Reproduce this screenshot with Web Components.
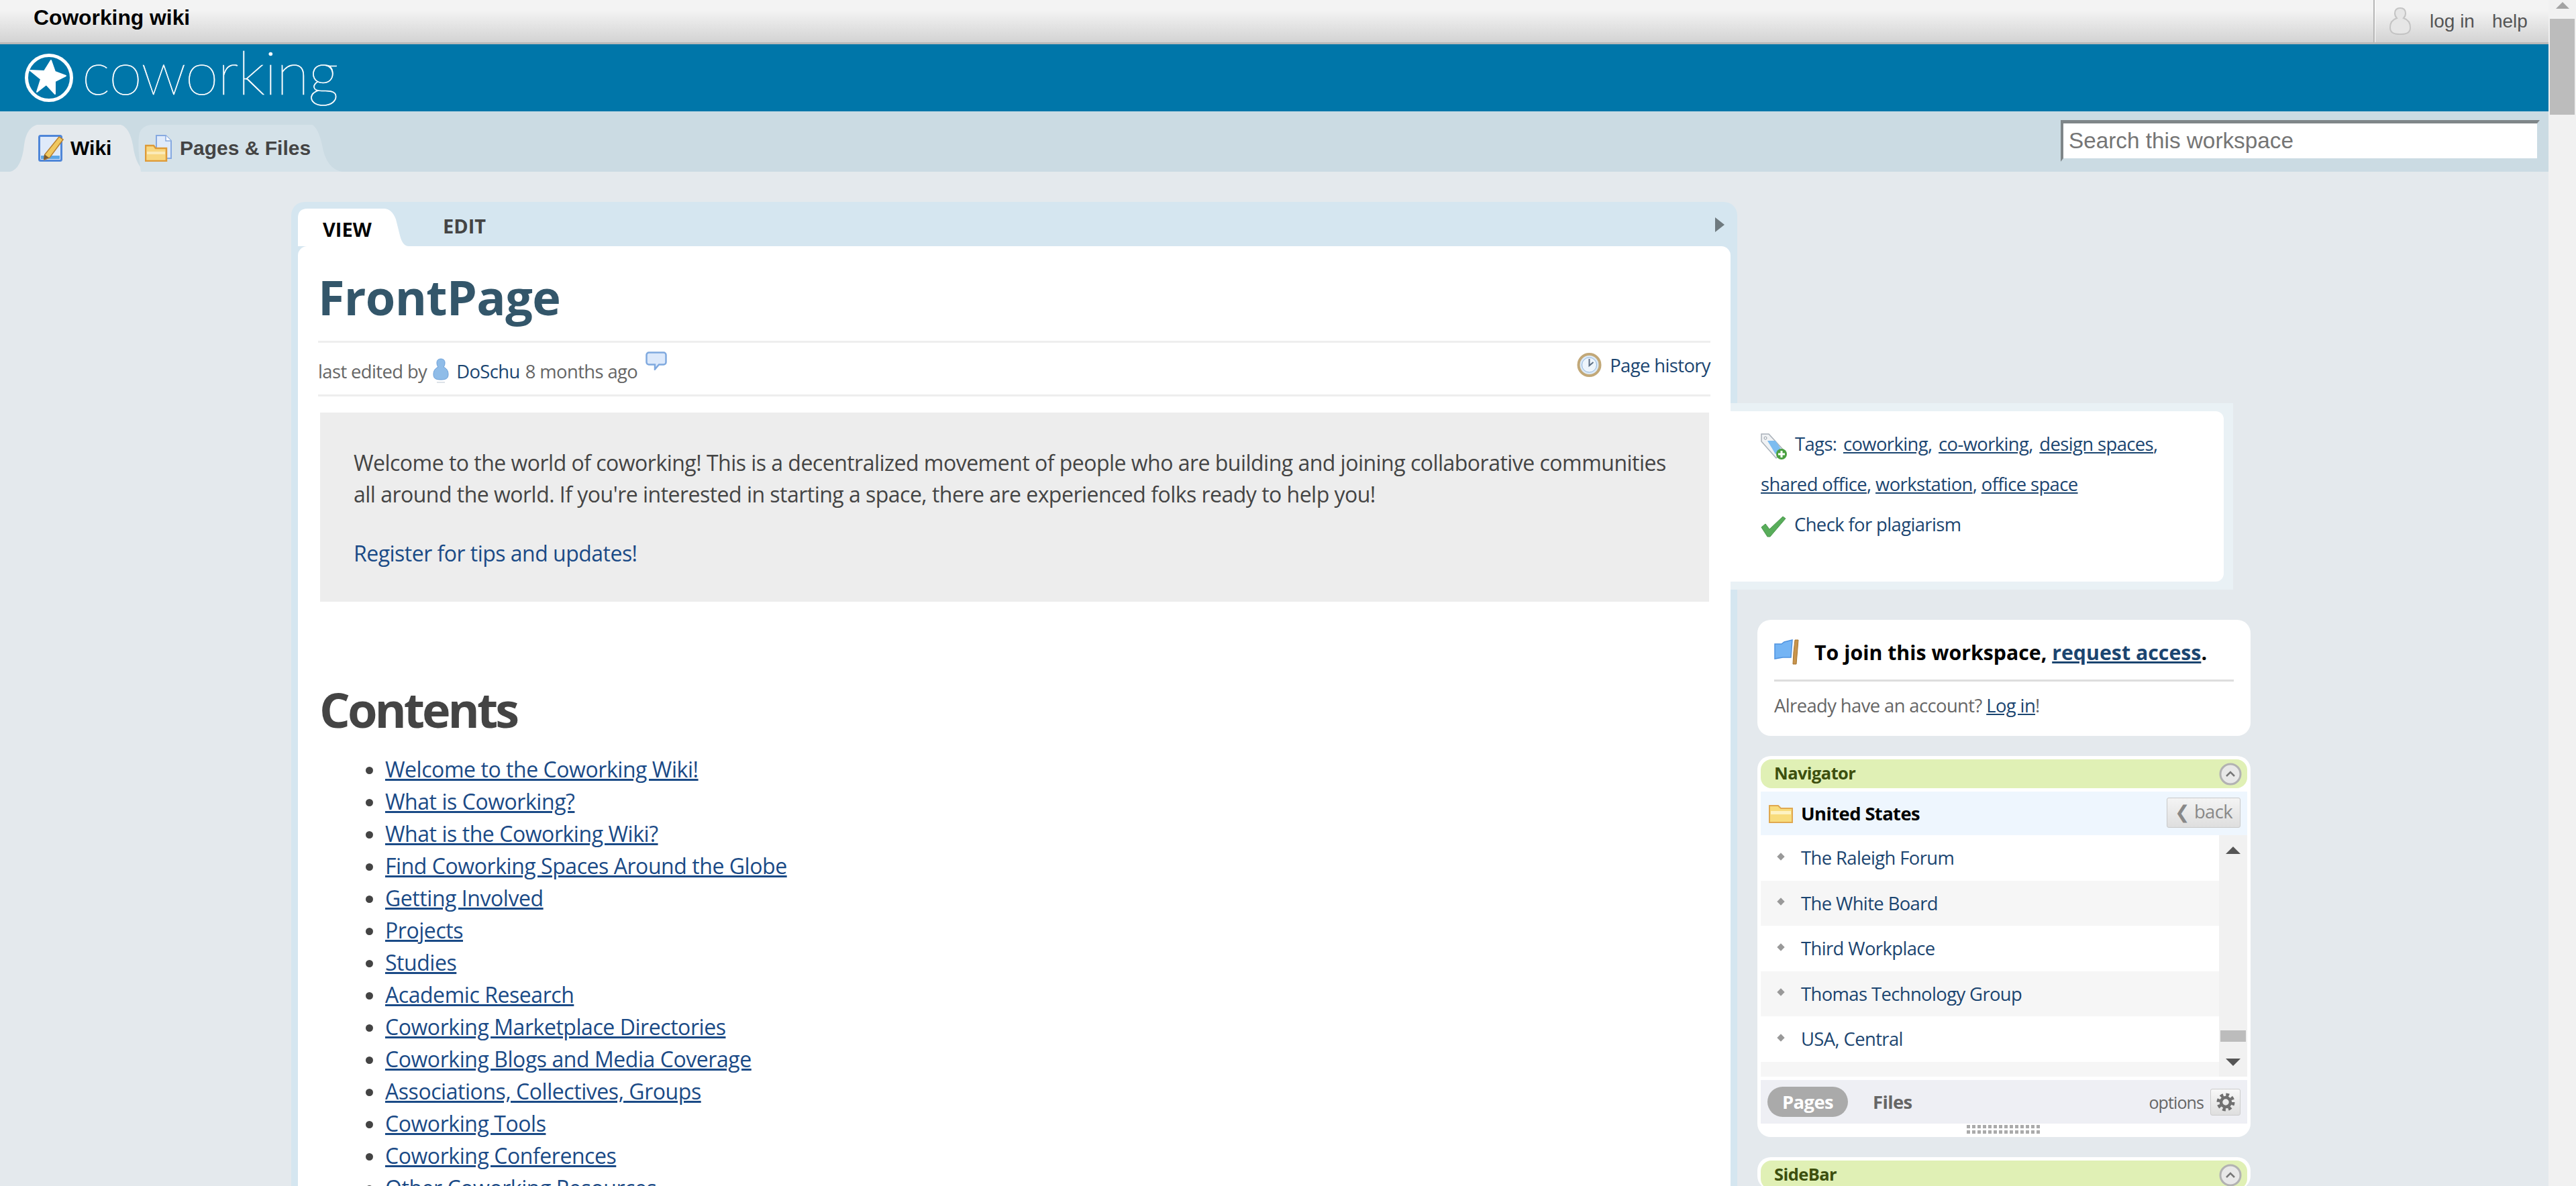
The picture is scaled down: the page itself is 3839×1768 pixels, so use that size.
<!DOCTYPE html>
<html lang="en">
<head>
<meta charset="utf-8">
<title>Coworking wiki</title>
<style>
    html, body { margin: 0; height: 100%; overflow: hidden; background: #e4e9ed; }
    body { font-family: "Open Sans", "Liberation Sans", sans-serif; color: #444; }
</style>
</head>
<body>
<cw-app></cw-app>
<script>
const ICONS = {
    pageEdit: `<svg width="38" height="40" viewBox="0 0 38 40"><rect x="1.5" y="1.5" width="33" height="37" rx="2" fill="#dfeafa" stroke="#4f86d8" stroke-width="3"/><rect x="4" y="31" width="28" height="5" fill="#5aa5e6"/><path d="M31 3l6 4-20 27-8 3 1-8z" fill="#f0c860" stroke="#b98030" stroke-width="1.5"/><path d="M9 29l-1 8 8-3z" fill="#7a5a30"/></svg>`,
    pages: `<svg width="40" height="40" viewBox="0 0 40 40"><path d="M17 1h14l8 8v26H17z" fill="#e0ebfb" stroke="#86a9e0" stroke-width="2"/><path d="M31 1v8h8" fill="#fff" stroke="#86a9e0" stroke-width="1.5"/><path d="M1 16h12l3 4h16v19H1z" fill="#f8d780" stroke="#dd9a38" stroke-width="2.5"/><rect x="3" y="25" width="27" height="4" fill="#fbeab8"/></svg>`,
    userGrey: `<svg width="32" height="41" viewBox="0 0 32 41"><path d="M16 1c5 0 8 3 8 8 0 4-2 6-3 7 6 2 10 6 10 14 0 7-4 10-15 10S1 37 1 30c0-8 4-12 10-14-1-1-3-3-3-7 0-5 3-8 8-8z" fill="#e6e6e6" stroke="#c4c4c4" stroke-width="2"/></svg>`,
    userBlue: `<svg width="24" height="38" viewBox="0 0 24 38"><path d="M12 1c4 0 6 2 6 6 0 3-1 5-2 6 4 2 7 5 7 11 0 6-3 8-11 8S1 30 1 24c0-6 3-9 7-11-1-1-2-3-2-6 0-4 2-6 6-6z" fill="#8fbce8" stroke="#6b9fd8"/><rect x="6" y="35" width="12" height="2" fill="#dde3e8"/></svg>`,
    comment: `<svg width="32" height="28" viewBox="0 0 32 28"><path d="M5 1.500h22a3.500 3.500 0 0 1 3.500 3.500v11a3.500 3.500 0 0 1-3.500 3.500h-7l-6 7v-7h-9A3.500 3.500 0 0 1 1.500 16V5A3.500 3.500 0 0 1 5 1.500z" fill="#dce9fb" stroke="#7fa9df" stroke-width="2.500"/></svg>`,
    clock: `<svg width="37" height="36" viewBox="0 0 37 36"><circle cx="18.500" cy="18" r="16" fill="#dbe9f7" stroke="#c2a878" stroke-width="4"/><circle cx="18.500" cy="18" r="11" fill="#eef5fc" stroke="#8fb4dc"/><path d="M18.500 9v10l6-5" fill="none" stroke="#5d6f85" stroke-width="2"/></svg>`,
    tag: `<svg width="40" height="40" viewBox="0 0 40 40"><path d="M1 2h11l22 24-11 12L1 13z" fill="#f0f2f4" stroke="#a8b0b8" stroke-width="1.500"/><path d="M10 12l12 0 8 12-8 8z" fill="#7cbcf0"/><circle cx="7" cy="8" r="2" fill="#fff" stroke="#8e98a2"/><circle cx="31" cy="32" r="8" fill="#4aa040"/><path d="M31 27v10M26 32h10" stroke="#fff" stroke-width="3"/></svg>`,
    check: `<svg width="38" height="32" viewBox="0 0 38 32"><path d="M1 17l6-5 6 8L33 1l4 3-23 27h-4z" fill="#58ad5a" stroke="#4a964c"/></svg>`,
    flag: `<svg width="38" height="38" viewBox="0 0 38 38"><path d="M1 7l10 0 4-3 12-3-2 26-12 0-12 2z" fill="#74b4f4" stroke="#4f93e0" stroke-width="1.500"/><path d="M31 1l5 0-3 36-5 0 1-18z" fill="#c8944c" stroke="#a6752f"/></svg>`,
    folder: `<svg width="36" height="28" viewBox="0 0 36 28"><path d="M1 2h13l4 4h17v21H1z" fill="#f8dc7c" stroke="#e0a850" stroke-width="2"/><path d="M3 10h30v5H3z" fill="#fdf2c2"/></svg>`,
    collapse: `<svg width="34" height="34" viewBox="0 0 34 34"><circle cx="17" cy="17" r="15" fill="#e8e8e8" stroke="#b2b2b2" stroke-width="3"/><path d="M11 20l6-6 6 6" fill="none" stroke="#777" stroke-width="2.500"/></svg>`,
    gear: `<svg width="28" height="28" viewBox="0 0 28 28"><circle cx="14" cy="14" r="7" fill="none" stroke="#707070" stroke-width="4.500"/><circle cx="14" cy="14" r="11" fill="none" stroke="#707070" stroke-width="5" stroke-dasharray="4.640 4"/></svg>`
};

class CwIcon extends HTMLElement {
    connectedCallback() {
        this.attachShadow({ mode: 'open' });
        this.shadowRoot.innerHTML = `
            <style>
                :host { display: inline-flex; flex: none; }
                svg { display: block; }
            </style>
            ${ICONS[this.getAttribute('name')]}
        `;
    }
}

class CwApp extends HTMLElement {
    connectedCallback() {
        this.attachShadow({ mode: 'open' });
        this.shadowRoot.innerHTML = `
            <style>
                :host { display: grid; grid-template-columns: 3798px 41px; height: 1768px; overflow: hidden; }
                .main { min-width: 0; height: 1768px; overflow: hidden; }
                .content {
                    display: grid;
                    grid-template-columns: 2155px 775px;
                    padding: 45px 0 0 434px;
                    align-items: start;
                }
            </style>
            <div class="main">
                <cw-topbar></cw-topbar>
                <cw-brand></cw-brand>
                <cw-navbar></cw-navbar>
                <div class="content">
                    <cw-wiki-card></cw-wiki-card>
                    <cw-sidebar></cw-sidebar>
                </div>
            </div>
            <cw-page-scroll></cw-page-scroll>
        `;
    }
}

class CwPageScroll extends HTMLElement {
    connectedCallback() {
        this.attachShadow({ mode: 'open' });
        this.shadowRoot.innerHTML = `
            <style>
                :host { display: block; background: #f1f1f1; height: 1768px; padding: 3px 2px 0; box-sizing: border-box; }
                .up { width: 0; height: 0; margin: 0 auto; border: 10px solid transparent; border-top: 0; border-bottom-color: #a3a3a3; }
                .thumb { height: 143px; margin-top: 15px; background: #bcbcbc; }
            </style>
            <div class="up"></div>
            <div class="thumb"></div>
        `;
    }
}

class CwTopbar extends HTMLElement {
    connectedCallback() {
        this.attachShadow({ mode: 'open' });
        this.shadowRoot.innerHTML = `
            <style>
                :host {
                    display: flex;
                    justify-content: space-between;
                    height: 63px;
                    border-bottom: 3px solid #b9b9b9;
                    background: linear-gradient(#f3f3f3 25%, #d3d3d3);
                    font-family: "Liberation Sans", Arial, sans-serif;
                }
                .title { padding: 7px 0 0 50px; font-size: 31.800px; font-weight: bold; color: #000; line-height: 38px; }
                .right {
                    display: flex;
                    align-items: center;
                    width: 261px;
                    box-sizing: border-box;
                    padding: 0 0 0 22px;
                    border-left: 2px solid #b5b5b5;
                    box-shadow: inset 1px 0 0 #fff;
                    color: #555;
                    font-size: 28px;
                }
                .right span { margin-left: 26px; }
                .right span:first-of-type { margin-left: 28px; }
            </style>
            <div class="title">Coworking wiki</div>
            <div class="right">
                <cw-icon name="userGrey"></cw-icon>
                <span>log in</span>
                <span>help</span>
            </div>
        `;
    }
}

class CwBrand extends HTMLElement {
    connectedCallback() {
        this.attachShadow({ mode: 'open' });
        this.shadowRoot.innerHTML = `
            <style>
                :host {
                    display: flex;
                    align-items: center;
                    gap: 12px;
                    height: 100px;
                    padding-left: 36px;
                    background: #0076a9;
                    color: #fff;
                }
                svg { display: block; flex: none; }
                .word {
                    font-family: Lato, "Open Sans", sans-serif;
                    font-weight: 100;
                    font-size: 90px;
                    line-height: 100px;
                    letter-spacing: -1px;
                    margin-top: -20px;
                    -webkit-text-stroke: 0.700px #fff;
                }
            </style>
            <svg width="74" height="76" viewBox="0 0 74 76">
                <circle cx="37" cy="38" r="33.500" fill="none" stroke="#fff" stroke-width="5"/>
                <path d="M40 12L46 29L62 35L46 43L46 62L33 48L19 59L25 40L9 27L30 28Z" fill="#fff" stroke="#fff" stroke-width="2" stroke-linejoin="round"/>
            </svg>
            <span class="word">coworking</span>
        `;
    }
}

class CwNavbar extends HTMLElement {
    connectedCallback() {
        this.attachShadow({ mode: 'open' });
        this.shadowRoot.innerHTML = `
            <style>
                :host {
                    display: flex;
                    align-items: flex-end;
                    justify-content: space-between;
                    height: 90px;
                    background: #cbdbe3;
                    font-family: "Liberation Sans", Arial, sans-serif;
                }
                .tabs { display: flex; padding-left: 15px; }
                .tab {
                    display: flex;
                    align-items: center;
                    gap: 10px;
                    height: 70px;
                    box-sizing: border-box;
                    font-size: 30px;
                    font-weight: bold;
                }
                .wiki {
                    width: 205px;
                    padding-left: 42px;
                    background: #e4e9ed;
                    color: #000;
                    clip-path: path('M0 70Q17 66 21 30Q24 5 40 0H165Q178 4 183 30Q188 66 205 70Z');
                }
                .pages {
                    width: 310px;
                    margin-left: -20px;
                    padding-left: 16px;
                    gap: 12px;
                    background: #d5e2e9;
                    color: #444;
                    clip-path: path('M10 70Q4 30 8 12Q12 2 24 0H265Q274 4 280 30Q286 66 310 70Z');
                }
                input {
                    width: 714px;
                    height: 62px;
                    box-sizing: border-box;
                    margin: 0 13px 15px 0;
                    padding: 0 0 0 8px;
                    border-style: solid;
                    border-width: 5px 4px 5px 4px;
                    border-color: #7f8689 #cbdbe3 #cbdbe3 #7f8689;
                    background: #fff;
                    font: 33.300px "Liberation Sans", Arial, sans-serif;
                    color: #757575;
                    outline: none;
                }
                input::placeholder { color: #757575; opacity: 1; }
            </style>
            <div class="tabs">
                <div class="tab wiki"><cw-icon name="pageEdit"></cw-icon>Wiki</div>
                <div class="tab pages"><cw-icon name="pages"></cw-icon>Pages &amp; Files</div>
            </div>
            <input placeholder="Search this workspace">
        `;
    }
}

class CwWikiCard extends HTMLElement {
    connectedCallback() {
        this.attachShadow({ mode: 'open' });
        const items = ['Welcome to the Coworking Wiki!', 'What is Coworking?', 'What is the Coworking Wiki?',
            'Find Coworking Spaces Around the Globe', 'Getting Involved', 'Projects', 'Studies', 'Academic Research',
            'Coworking Marketplace Directories', 'Coworking Blogs and Media Coverage',
            'Associations, Collectives, Groups', 'Coworking Tools', 'Coworking Conferences', 'Other Coworking Resources'];
        this.shadowRoot.innerHTML = `
            <style>
                :host {
                    display: block;
                    padding: 0 10px;
                    background: #d5e6f0;
                    border-radius: 20px 20px 0 0;
                    font-size: 32px;
                    letter-spacing: -0.450px;
                    color: #444;
                }
                a { color: #1a4a86; }
                .strip { display: flex; height: 66px; }
                .view {
                    width: 165px;
                    height: 56px;
                    margin-top: 10px;
                    box-sizing: border-box;
                    padding-left: 37px;
                    background: #fff;
                    clip-path: path('M0 56V14Q0 0 14 0H128Q140 0 146 16L152 40Q156 56 165 56Z');
                    color: #000;
                    font-size: 29px;
                    font-weight: 700;
                    letter-spacing: 0;
                    line-height: 62px;
                }
                .edit {
                    margin-left: 51px;
                    color: #444;
                    font-size: 29px;
                    font-weight: 700;
                    letter-spacing: 0;
                    line-height: 72px;
                }
                .arrow {
                    margin: 23px 9px 0 auto;
                    width: 0;
                    height: 0;
                    border: solid transparent;
                    border-width: 11.500px 0 11.500px 14px;
                    border-left-color: #6f7a7f;
                }
                .body {
                    padding: 35px 30px 0;
                    background: #fff;
                    border-radius: 14px 14px 0 0;
                    min-height: 1500px;
                }
                h1, h2 { margin: 0; font-size: 72px; line-height: 80px; font-weight: 700; }
                h1 { color: #33566a; letter-spacing: -0.700px; }
                h2 { margin-top: 120px; margin-left: 2px; color: #444; letter-spacing: -4px; }
                .meta {
                    display: flex;
                    justify-content: space-between;
                    height: 77px;
                    margin-top: 26px;
                    border-top: 3px solid #eee;
                    border-bottom: 3px solid #eee;
                    font-size: 27.400px;
                    letter-spacing: -0.600px;
                    color: #666;
                }
                .meta a { color: #1b4570; text-decoration: none; }
                .by { display: flex; align-items: center; gap: 8px; padding-top: 7px; }
                .by cw-icon[name=comment] { margin: -30px 0 0 4px; }
                .by cw-icon[name=userBlue] { margin: 0 3px 0 1px; }
                .hist { display: flex; align-items: center; gap: 12px; padding-bottom: 11px; }
                .welcome {
                    margin: 24px 2px 0 3px;
                    padding: 51px 30px 49px 50px;
                    background: #ededed;
                    line-height: 47px;
                    letter-spacing: -0.520px;
                }
                .welcome p { margin: 0; }
                .welcome p + p { margin-top: 41px; }
                .welcome a { text-decoration: none; }
                ul { margin: 26px 0 0; padding: 0 0 0 100px; line-height: 48px; }
            </style>
            <div class="strip">
                <div class="view">VIEW</div>
                <div class="edit">EDIT</div>
                <div class="arrow"></div>
            </div>
            <div class="body">
                <h1>FrontPage</h1>
                <div class="meta">
                    <div class="by">last edited by <cw-icon name="userBlue"></cw-icon> <a href="#">DoSchu</a> 8 months ago <cw-icon name="comment"></cw-icon></div>
                    <a class="hist" href="#"><cw-icon name="clock"></cw-icon>Page history</a>
                </div>
                <div class="welcome">
                    <p>Welcome to the world of coworking! This is a decentralized movement of people who are building and joining collaborative communities all around the world. If you're interested in starting a space, there are experienced folks ready to help you!</p>
                    <p><a href="#">Register for tips and updates!</a></p>
                </div>
                <h2>Contents</h2>
                <ul>${items.map(t => `<li><a href="#">${t}</a></li>`).join('')}</ul>
            </div>
        `;
    }
}

class CwSidebar extends HTMLElement {
    connectedCallback() {
        this.attachShadow({ mode: 'open' });
        this.shadowRoot.innerHTML = `
            <style>
                :host { display: block; padding-top: 300px; font-size: 27.400px; letter-spacing: -0.600px; color: #666; }
                a { color: #1b4570; }
                .tags {
                    position: relative;
                    width: 749px;
                    margin-left: -10px;
                    box-sizing: border-box;
                    padding: 12px 14px 12px 0;
                    background: #e9f1f5;
                }
                .tags-in {
                    height: 254px;
                    box-sizing: border-box;
                    padding: 19px 0 0 45px;
                    background: #fff;
                    border-radius: 0 12px 12px 0;
                    line-height: 60px;
                    color: #1b4570;
                }
                .tags-in cw-icon { vertical-align: middle; margin-right: 11px; }
                .tags-in .chk { margin-right: 12px; }
                .first a { margin-left: 3px; }
                .stack { display: flex; flex-direction: column; gap: 30px; margin: 45px 0 0 30px; width: 735px; }
                .join { padding: 27px 25px 0; height: 173px; box-sizing: border-box; background: #fff; border-radius: 20px; }
                .join-t { display: flex; align-items: center; gap: 22px; height: 42px; font-size: 30.300px; letter-spacing: 0; font-weight: 700; color: #000; }
                .join hr { height: 3px; margin: 20px 0 17px; border: 0; background: #ddd; }
                .list-head {
                    display: flex;
                    align-items: center;
                    height: 65px;
                    margin-top: 5px;
                    padding: 0 10px 0 12px;
                    background: #eef6fe;
                    color: #000;
                    font-weight: 700;
                }
                .list-head cw-icon { margin-right: 12px; }
                .back {
                    margin: -3px 0 0 auto;
                    width: 110px;
                    height: 45px;
                    box-sizing: border-box;
                    border: 1px solid #c8c8c8;
                    border-radius: 3px;
                    background: linear-gradient(#f4f4f4, #dedede);
                    color: #888;
                    font-weight: 400;
                    text-align: center;
                    line-height: 40px;
                }
                .list { display: grid; grid-template-columns: 683px 42px; height: 360px; overflow: hidden; }
                .row { display: flex; align-items: center; height: 67.500px; padding-left: 60px; box-sizing: border-box; color: #1b4570; }
                .row:nth-child(even) { background: #f6f6f6; }
                .dot { width: 8px; height: 8px; margin: -4px 26px 0 -34px; background: #999; transform: rotate(45deg); }
                .sb { background: #f1f1f1; padding-top: 17px; box-sizing: border-box; }
                .up, .down { width: 0; height: 0; margin: 0 auto; border: solid transparent; border-width: 0 11px 11px; border-bottom-color: #555; }
                .down { border-width: 11px 11px 0; border-top-color: #555; border-bottom-color: transparent; }
                .thumb { height: 17px; margin: 263px 2px 25px; background: #bcbcbc; }
                .foot {
                    display: flex;
                    align-items: center;
                    height: 65px;
                    margin-top: 5px;
                    padding: 0 10px;
                    background: #eeeff4;
                }
                .pill {
                    padding: 0 22px;
                    height: 45px;
                    line-height: 45px;
                    border-radius: 23px;
                    background: #aaa;
                    color: #fff;
                    font-weight: 700;
                }
                .files { margin-left: 37px; font-weight: 700; color: #666; }
                .opt { margin-left: auto; font-size: 25px; letter-spacing: -0.900px; }
                .gear {
                    display: flex;
                    align-items: center;
                    justify-content: center;
                    width: 45px;
                    height: 40px;
                    margin-left: 10px;
                    border: 1px solid #ccc;
                    box-sizing: border-box;
                    border-radius: 3px;
                    background: linear-gradient(#f8f8f8, #dedede);
                }
                .grip {
                    width: 111px;
                    height: 13px;
                    margin: 2px auto 5px;
                    background: repeating-linear-gradient(90deg, #aaa 0 5px, transparent 5px 8px);
                    -webkit-mask: repeating-linear-gradient(#000 0 5px, transparent 5px 8px);
                }
            </style>
            <div class="tags">
                <div class="tags-in">
                    <span class="first"><cw-icon name="tag"></cw-icon>Tags: <a href="#">coworking</a>, <a href="#">co-working</a>, <a href="#">design spaces</a>,</span><br>
                    <a href="#">shared office</a>, <a href="#">workstation</a>, <a href="#">office space</a><br>
                    <cw-icon class="chk" name="check"></cw-icon>Check for plagiarism
                </div>
            </div>
            <div class="stack">
                <div class="join">
                    <div class="join-t"><cw-icon name="flag"></cw-icon><span>To join this workspace, <a href="#">request access</a>.</span></div>
                    <hr>
                    <div>Already have an account? <a href="#">Log in</a>!</div>
                </div>
                <cw-widget title="Navigator">
                    <div class="list-head"><cw-icon name="folder"></cw-icon>United States<div class="back">&#10094; back</div></div>
                    <div class="list">
                        <div>
                            <div class="row"><i class="dot"></i>The Raleigh Forum</div>
                            <div class="row"><i class="dot"></i>The White Board</div>
                            <div class="row"><i class="dot"></i>Third Workplace</div>
                            <div class="row"><i class="dot"></i>Thomas Technology Group</div>
                            <div class="row"><i class="dot"></i>USA, Central</div>
                            <div class="row"></div>
                        </div>
                        <div class="sb"><div class="up"></div><div class="thumb"></div><div class="down"></div></div>
                    </div>
                    <div class="foot">
                        <span class="pill">Pages</span><span class="files">Files</span>
                        <span class="opt">options</span><span class="gear"><cw-icon name="gear"></cw-icon></span>
                    </div>
                    <div class="grip"></div>
                </cw-widget>
                <cw-widget title="SideBar"></cw-widget>
            </div>
        `;
    }
}

class CwWidget extends HTMLElement {
    connectedCallback() {
        this.attachShadow({ mode: 'open' });
        this.shadowRoot.innerHTML = `
            <style>
                :host { display: block; padding: 5px 5px 0; background: #fff; border-radius: 20px; }
                .head {
                    display: flex;
                    align-items: center;
                    justify-content: space-between;
                    height: 43px;
                    box-sizing: border-box;
                    padding: 0 8px 4px 20px;
                    background: #e0f0b5;
                    border-radius: 16px;
                    color: #3d4f0e;
                    font-weight: 700;
                    font-size: 25.500px;
                }
                .head cw-icon { margin-bottom: -4px; }
            </style>
            <div class="head">${this.getAttribute('title')}<cw-icon name="collapse"></cw-icon></div>
            <slot></slot>
        `;
    }
}

customElements.define('cw-icon', CwIcon);
customElements.define('cw-app', CwApp);
customElements.define('cw-page-scroll', CwPageScroll);
customElements.define('cw-topbar', CwTopbar);
customElements.define('cw-brand', CwBrand);
customElements.define('cw-navbar', CwNavbar);
customElements.define('cw-wiki-card', CwWikiCard);
customElements.define('cw-sidebar', CwSidebar);
customElements.define('cw-widget', CwWidget);
</script>
</body>
</html>
